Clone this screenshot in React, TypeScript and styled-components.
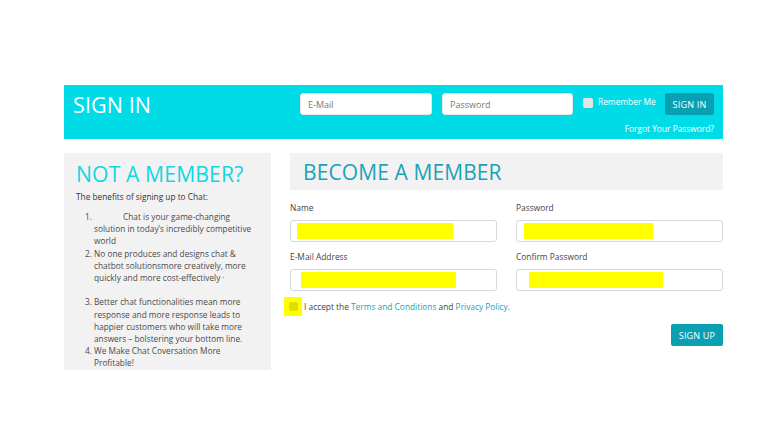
import React from "react";
import styled, { createGlobalStyle } from "styled-components";

const Global = createGlobalStyle`
  html, body { margin: 0; padding: 0; background: #fff; }
  body { font-family: "Open Sans", "Liberation Sans", Arial, sans-serif; color: #444; }
  * { box-sizing: border-box; }
`;

const Page = styled.div`
  width: 782px;
  height: 440px;
  padding: 85px 59px 0 64px;
`;

const Header = styled.div`
  height: 54px;
  background: #00dce7;
  display: flex;
  justify-content: space-between;
  padding: 8px 9px 0 9px;
`;

const Title = styled.h1`
  margin: 0;
  font-weight: 400;
  font-size: 21.5px;
  line-height: 23px;
  color: #fff;
  letter-spacing: 0.1px;
`;

const LoginForm = styled.div`
  display: flex;
  flex-direction: column;
  align-items: flex-end;
  gap: 8px;
`;

const LoginRow = styled.div`
  display: flex;
  align-items: center;
`;

const TopInput = styled.div<{ $w: number; $mr: number }>`
  width: ${(p) => p.$w}px;
  height: 22px;
  margin-right: ${(p) => p.$mr}px;
  background: #fff;
  border-radius: 3px;
  border: 1px solid #e6e6e6;
  font-size: 9px;
  color: #777;
  padding-left: 7px;
  display: flex;
  align-items: center;
`;

const Check = styled.span`
  width: 10px;
  height: 10px;
  border-radius: 2px;
  background: #e3e6e8;
  margin-top: -2px;
`;

const Remember = styled.span`
  font-size: 8.4px;
  color: #fff;
  margin-left: 5px;
  margin-right: 10px;
  margin-top: -5px;
  width: 57px;
  white-space: nowrap;
`;

const Button = styled.button<{ $w: number }>`
  width: ${(p) => p.$w}px;
  height: 22px;
  border: none;
  border-radius: 2px;
  background: #0a9fb3;
  color: #fff;
  font-family: inherit;
  font-size: 9px;
  padding: 0;
  letter-spacing: 0.2px;
`;

const Forgot = styled.a`
  font-size: 8.4px;
  color: #fff;
  text-decoration: none;
  line-height: 11px;
`;

const Body = styled.div`
  display: flex;
  gap: 19px;
  margin-top: 14px;
  align-items: flex-start;
`;

const Aside = styled.div`
  width: 207px;
  height: 217px;
  background: #f2f2f2;
  padding: 9px 14px 0 12px;
`;

const AsideTitle = styled.h2`
  margin: 0;
  font-weight: 400;
  font-size: 21.2px;
  line-height: 24px;
  color: #11d6e2;
  letter-spacing: 0.1px;
  white-space: nowrap;
`;

const Intro = styled.p`
  margin: 5px 0 0 0;
  font-size: 8.3px;
  line-height: 12px;
  color: #333;
`;

const List = styled.ol`
  margin: 8px 0 0 0;
  padding-left: 18px;
  font-size: 8.3px;
  line-height: 12.2px;
  color: #4a4a4a;
`;

const Indent = styled.span`
  display: inline-block;
  width: 29px;
`;

const Main = styled.div`
  width: 433px;
`;

const MainHead = styled.div`
  height: 37px;
  background: #f2f2f2;
  padding-left: 13px;
  display: flex;
  align-items: center;
`;

const MainTitle = styled.h2`
  margin: 0;
  font-weight: 400;
  font-size: 21px;
  color: #1aa2b8;
  letter-spacing: 0.1px;
`;

const Grid = styled.div`
  display: grid;
  grid-template-columns: 207px 207px;
  column-gap: 19px;
  row-gap: 9px;
  margin-top: 12px;
`;

const Field = styled.div`
  display: flex;
  flex-direction: column;
`;

const Label = styled.label`
  font-size: 8.4px;
  line-height: 12px;
  color: #444;
  margin-bottom: 6px;
`;

const InputBox = styled.div<{ $pl: number }>`
  height: 22px;
  border: 1px solid #d5d9dc;
  border-radius: 3px;
  background: #fff;
  display: flex;
  align-items: center;
  padding-left: ${(p) => p.$pl}px;
`;

const Redact = styled.span<{ $w: number }>`
  display: block;
  width: ${(p) => p.$w}px;
  height: 16px;
  background: #ffff00;
`;

const TermsRow = styled.div`
  display: flex;
  align-items: center;
  margin-top: 6px;
  margin-left: -6px;
  font-size: 8.35px;
  color: #444;
`;

const YellowBox = styled.span`
  width: 18px;
  height: 19px;
  background: #ffff00;
  display: flex;
  align-items: center;
  justify-content: center;
  margin-right: 2px;
`;

const InnerCheck = styled.span`
  width: 9px;
  height: 9px;
  border-radius: 2px;
  background: #dede00;
`;

const Link = styled.a`
  color: #1a9fb5;
  text-decoration: none;
`;

const Actions = styled.div`
  display: flex;
  justify-content: flex-end;
  margin-top: 8px;
`;

export default function App() {
  return (
    <>
      <Global />
      <Page>
        <Header>
          <Title>SIGN IN</Title>
          <LoginForm>
            <LoginRow>
              <TopInput $w={132} $mr={10}>E-Mail</TopInput>
              <TopInput $w={131} $mr={10}>Password</TopInput>
              <Check />
              <Remember>Remember Me</Remember>
              <Button $w={49}>SIGN IN</Button>
            </LoginRow>
            <Forgot>Forgot Your Password?</Forgot>
          </LoginForm>
        </Header>
        <Body>
          <Aside>
            <AsideTitle>NOT A MEMBER?</AsideTitle>
            <Intro>The benefits of signing up to Chat:</Intro>
            <List>
              <li>
                <Indent />
                Chat is your game-changing solution in today’s incredibly competitive world
              </li>
              <li>
                No one produces and designs chat &amp; chatbot solutionsmore creatively, more quickly and more cost-effectively ·
                <br />
                <br />
              </li>
              <li>
                Better chat functionalities mean more response and more response leads to happier customers who will take more answers – bolstering your bottom line.
              </li>
              <li>We Make Chat Coversation More Profitable!</li>
            </List>
          </Aside>
          <Main>
            <MainHead>
              <MainTitle>BECOME A MEMBER</MainTitle>
            </MainHead>
            <Grid>
              <Field>
                <Label>Name</Label>
                <InputBox $pl={6}>
                  <Redact $w={156} />
                </InputBox>
              </Field>
              <Field>
                <Label>Password</Label>
                <InputBox $pl={7}>
                  <Redact $w={129} />
                </InputBox>
              </Field>
              <Field>
                <Label>E-Mail Address</Label>
                <InputBox $pl={10}>
                  <Redact $w={155} />
                </InputBox>
              </Field>
              <Field>
                <Label>Confirm Password</Label>
                <InputBox $pl={12}>
                  <Redact $w={134} />
                </InputBox>
              </Field>
            </Grid>
            <TermsRow>
              <YellowBox>
                <InnerCheck />
              </YellowBox>
              <span>
                I accept the <Link>Terms and Conditions</Link> and <Link>Privacy Policy</Link>.
              </span>
            </TermsRow>
            <Actions>
              <Button $w={52}>SIGN UP</Button>
            </Actions>
          </Main>
        </Body>
      </Page>
    </>
  );
}
